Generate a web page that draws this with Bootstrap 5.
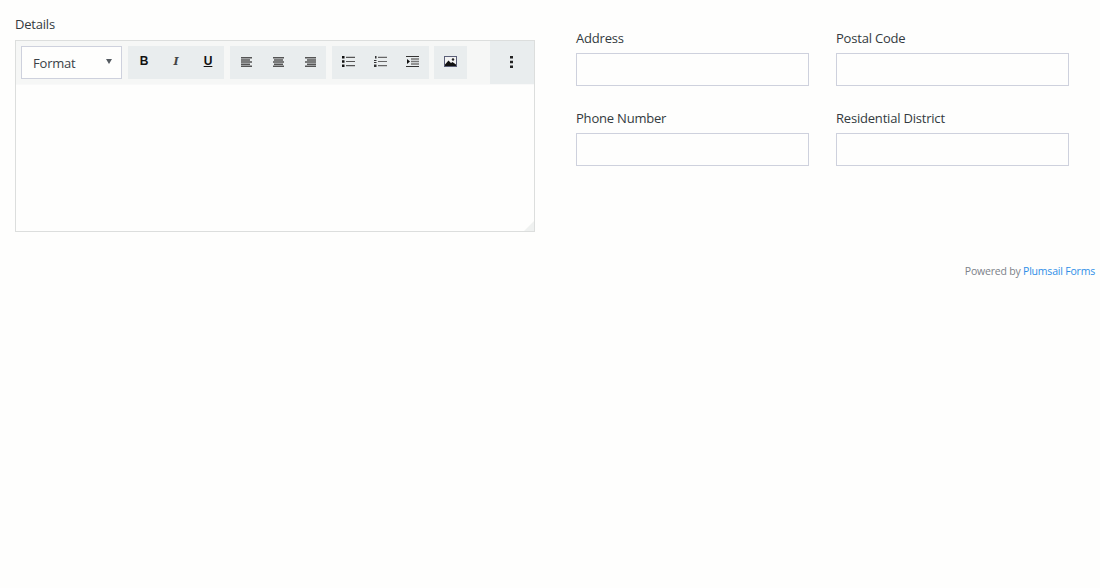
<!DOCTYPE html>
<html lang="en">
<head>
<meta charset="utf-8">
<title>Form</title>
<link href="https://cdn.jsdelivr.net/npm/bootstrap@5.3.0/dist/css/bootstrap.min.css" rel="stylesheet">
<style>
html,body{height:100%;}
body{background:#fefefd;color:#3a4148;font-family:"Open Sans","Liberation Sans",sans-serif;font-size:13px;letter-spacing:-.2px;overflow:hidden;}
.form-wrap{padding:15px 5px 0 15px;}
.left-col{width:520px;margin-right:41px;flex:none;}
.right-col{width:493px;flex:none;padding-top:14px;}
.fld-grid{display:grid;grid-template-columns:233px 233px;column-gap:27px;row-gap:23px;}
.fld-label{display:block;line-height:18px;margin-bottom:6px;color:#333a40;}
.fld-input{display:block;width:100%;height:33px;border:1px solid #ced1dd;border-radius:0;background:#fefefd;padding:0 8px;}
.ed-label{line-height:18px;margin-bottom:7px;color:#333a40;}
.ed-box{position:relative;height:192px;border:1px solid #dcdedd;}
.ed-bar{height:44px;background:#f6f7f6;padding:5px 0 0 5px;gap:6px;border-bottom:1px solid #f9f9f9;}
.fmt{width:101px;height:33px;border:1px solid #ced1dd;background:#fefefd;padding:0 9px 0 11px;color:#3a4148;}
.fmt-txt{padding-top:2px;}
.caret-down{width:0;height:0;border-left:3.5px solid transparent;border-right:3.5px solid transparent;border-top:5px solid #555b61;margin-top:-2px;}
.tgrp{height:33px;background:#e9edee;}
.tbtn{width:32px;height:33px;padding:0 0 2px;border:0;background:transparent;color:#111;font:700 12px/31px "Liberation Sans",sans-serif;text-align:center;display:flex;align-items:center;justify-content:center;}
.ital{font:italic 700 11px/31px "DejaVu Serif",serif;color:#444;}
.g-b{width:96px}.g-a{width:96px}.g-l{width:97px}.g-i{width:33px;margin-left:-1px;}
.more{width:44px;height:43px;background:#e9edee;margin-left:auto;margin-top:-5px;padding-right:1px;padding-bottom:2px;}
.grip{position:absolute;right:0;bottom:0;}
.powered{text-align:right;font-size:10.5px;letter-spacing:-.2px;line-height:16px;color:#7c8289;padding:31px 0 0;}
.powered a{color:#2f8fe8;text-decoration:none;}
</style>
</head>
<body>
<div class="form-wrap">
  <div class="d-flex">
    <div class="left-col">
      <div class="ed-label">Details</div>
      <div class="ed-box">
        <div class="ed-bar d-flex align-items-start">
          <div class="fmt d-flex align-items-center justify-content-between"><span class="fmt-txt">Format</span><span class="caret-down"></span></div>
          <div class="tgrp g-b d-flex">
            <button class="tbtn" type="button">B</button>
            <button class="tbtn ital" type="button">I</button>
            <button class="tbtn" type="button"><u>U</u></button>
          </div>
          <div class="tgrp g-a d-flex">
            <button class="tbtn" type="button" aria-label="Align left"><svg width="11" height="10" viewBox="0 0 11 10"><path d="M0 .7h11M0 3h9M0 5h11M0 7.300h9M0 9.300h11" stroke="#555" stroke-width="1.400" fill="none"/></svg></button>
            <button class="tbtn" type="button" aria-label="Align center"><svg width="11" height="10" viewBox="0 0 11 10"><path d="M0 .7h11M1 3h9M0 5h11M1 7.300h9M0 9.300h11" stroke="#555" stroke-width="1.400" fill="none"/></svg></button>
            <button class="tbtn" type="button" aria-label="Align right"><svg width="11" height="10" viewBox="0 0 11 10"><path d="M0 .7h11M2 3h9M0 5h11M2 7.300h9M0 9.300h11" stroke="#555" stroke-width="1.400" fill="none"/></svg></button>
          </div>
          <div class="tgrp g-l d-flex">
            <button class="tbtn" type="button" aria-label="Bullets"><svg width="13" height="11" viewBox="0 0 13 11"><path d="M0 0h2.500v2.500H0zM0 4.250h2.500v2.500H0zM0 8.500h2.500V11H0z" fill="#111"/><path d="M4 1.300h9M4 5.500h9M4 9.700h9" stroke="#555" stroke-width="1.200" fill="none"/></svg></button>
            <button class="tbtn" type="button" aria-label="Numbers"><svg width="13" height="11" viewBox="0 0 13 11"><path d="M1 0h1.500v2.500H1zM0 4h2.500v1H0zM0 6h2.500v1H0zM0 8.500h2.500V11H0z" fill="#333"/><path d="M4 1.300h9M4 5.500h9M4 9.700h9" stroke="#666" stroke-width="1.200" fill="none"/></svg></button>
            <button class="tbtn" type="button" aria-label="Indent"><svg width="13" height="11" viewBox="0 0 13 11"><path d="M1 3l3 2.500-3 2.500z" fill="#111"/><path d="M0 .5h13M0 10.500h13" stroke="#333" fill="none"/><path d="M5 3h8M5 5.500h8M5 8h8" stroke="#777" stroke-width="1.400" fill="none"/></svg></button>
          </div>
          <div class="tgrp g-i d-flex">
            <button class="tbtn" type="button" aria-label="Image"><svg width="13" height="11" viewBox="0 0 13 11"><rect width="13" height="11" fill="#5b5f78"/><rect x="1" y="1" width="11" height="9" fill="#f3f3f3"/><circle cx="9" cy="3.500" r="1.200" fill="#222"/><path d="M1 10V8.500l3.500-4 2.500 2.500 1.500-1L12 8.500V10z" fill="#111"/></svg></button>
          </div>
          <div class="more d-flex align-items-center justify-content-center" aria-label="More"><svg width="3" height="12" viewBox="0 0 3 12"><path d="M0 0h3v2.500H0zM0 4.750h3v2.500H0zM0 9.500h3V12H0z" fill="#222"/></svg></div>
        </div>
        <svg class="grip" width="10" height="10" viewBox="0 0 10 10" aria-hidden="true"><path d="M10 0v10H0z" fill="#eff1f0"/></svg>
      </div>
    </div>
    <div class="right-col">
      <div class="fld-grid">
        <div><label class="fld-label">Address</label><input class="fld-input" type="text"></div>
        <div><label class="fld-label">Postal Code</label><input class="fld-input" type="text"></div>
        <div><label class="fld-label">Phone Number</label><input class="fld-input" type="text"></div>
        <div><label class="fld-label">Residential District</label><input class="fld-input" type="text"></div>
      </div>
    </div>
  </div>
  <div class="powered">Powered by <a href="#">Plumsail Forms</a></div>
</div>
</body>
</html>
